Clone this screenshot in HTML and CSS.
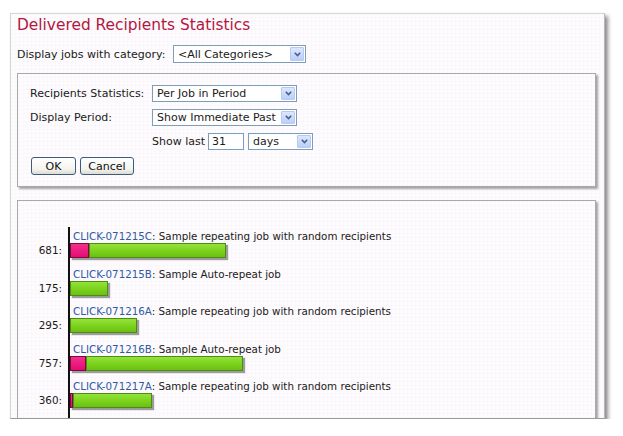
FILE: index.html
```html
<!DOCTYPE html>
<html lang="en">
<head>
    <meta charset="UTF-8">
    <title>Delivered Recipients Statistics</title>
    <link rel="stylesheet" href="styles.css">
</head>
<body>
<div class="page">
    <h1 class="title">Delivered Recipients Statistics</h1>
    <div class="filter">
        <span class="lbl">Display jobs with category:</span>
        <div class="select cat">
            <span class="val">&lt;All Categories&gt;</span>
            <span class="arrow"><svg width="7" height="5" viewBox="0 0 7 5"><path d="M0.8 0.8 L3.5 3.6 L6.2 0.8" fill="none" stroke="#4a5e86" stroke-width="1.6"/></svg></span>
        </div>
    </div>

    <div class="panel opts">
        <div class="field">
            <span class="name">Recipients Statistics:</span>
            <div class="select wide">
                <span class="val">Per Job in Period</span>
                <span class="arrow"><svg width="7" height="5" viewBox="0 0 7 5"><path d="M0.8 0.8 L3.5 3.6 L6.2 0.8" fill="none" stroke="#4a5e86" stroke-width="1.6"/></svg></span>
            </div>
        </div>
        <div class="field">
            <span class="name">Display Period:</span>
            <div class="select wide">
                <span class="val">Show Immediate Past</span>
                <span class="arrow"><svg width="7" height="5" viewBox="0 0 7 5"><path d="M0.8 0.8 L3.5 3.6 L6.2 0.8" fill="none" stroke="#4a5e86" stroke-width="1.6"/></svg></span>
            </div>
        </div>
        <div class="field">
            <span class="name"></span>
            <span class="txt">Show last</span>
            <div class="num">31</div>
            <div class="select days">
                <span class="val">days</span>
                <span class="arrow"><svg width="7" height="5" viewBox="0 0 7 5"><path d="M0.8 0.8 L3.5 3.6 L6.2 0.8" fill="none" stroke="#4a5e86" stroke-width="1.6"/></svg></span>
            </div>
        </div>
        <div class="buttons">
            <button class="btn ok">OK</button>
            <button class="btn cancel">Cancel</button>
        </div>
    </div>

    <div class="panel chart">
        <div class="rows">
            <div class="num-col">681:</div>
            <div class="bar-col">
                <div class="job"><a class="link">CLICK-071215C</a>: Sample repeating job with random recipients</div>
                <div class="bar"><span class="fail" style="width:19px"></span><span class="good" style="width:137px"></span></div>
            </div>

            <div class="num-col">175:</div>
            <div class="bar-col">
                <div class="job"><a class="link">CLICK-071215B</a>: Sample Auto-repeat job</div>
                <div class="bar"><span class="good" style="width:38px"></span></div>
            </div>

            <div class="num-col">295:</div>
            <div class="bar-col">
                <div class="job"><a class="link">CLICK-071216A</a>: Sample repeating job with random recipients</div>
                <div class="bar"><span class="good" style="width:67px"></span></div>
            </div>

            <div class="num-col">757:</div>
            <div class="bar-col">
                <div class="job"><a class="link">CLICK-071216B</a>: Sample Auto-repeat job</div>
                <div class="bar"><span class="fail" style="width:16px"></span><span class="good" style="width:157px"></span></div>
            </div>

            <div class="num-col">360:</div>
            <div class="bar-col">
                <div class="job"><a class="link">CLICK-071217A</a>: Sample repeating job with random recipients</div>
                <div class="bar"><span class="fail" style="width:3px"></span><span class="good" style="width:79px"></span></div>
            </div>

            <div class="num-col"></div>
            <div class="bar-col spacer"></div>
        </div>
    </div>
</div>
</body>
</html>
```

FILE: styles.css
```css
*{
    box-sizing: border-box;
}
html,body{
    margin:0;
    padding:0;
    background:#fff;
}
body{
    font-family: "DejaVu Sans", Verdana, sans-serif;
    font-size: 11px;
    color:#1a1a1a;
}
.page{
    margin:13px 0 0 10px;
    width:595px;
    height:406px;
    overflow: hidden;
    border:1px solid #d6d6d8;
    border-bottom-color:#9a9a9a;
    border-right-color:#b8b8b8;
    box-shadow: 3px 3px 4px #8c8c8c;
    padding:2px 9px 0 6px;
    background-color:#fdfbfd;
    background-image:
        repeating-linear-gradient(0deg, rgba(120,110,140,0.02) 0 1px, transparent 1px 4px),
        repeating-linear-gradient(90deg, rgba(120,110,140,0.02) 0 1px, transparent 1px 4px);
}
.title{
    margin:0;
    font-size:15.4px;
    line-height:18px;
    font-weight: normal;
    color:#b3163f;
}
.filter{
    display:flex;
    align-items: center;
    margin-top:11px;
    height:18px;
}
.filter .lbl{
    width:156px;
}

/* fake select boxes */
.select{
    display:flex;
    align-items: center;
    height:17px;
    background:#fff;
    border:1px solid #7f9db9;
    padding:1px;
}
.select .val{
    flex-grow:1;
    padding-left:3px;
    white-space: nowrap;
    overflow: hidden;
    line-height:13px;
}
.select .arrow{
    width:14px;
    height:100%;
    display:flex;
    align-items: center;
    justify-content: center;
    background: linear-gradient(#dce7fd, #b9cffa);
    border:1px solid #b7c9ef;
    border-radius:1px;
}
.cat{
    width:133px;
    height:18px;
}
.wide{
    width:145px;
}
.days{
    width:65px;
}

.panel{
    border:1px solid #a9a9a9;
    box-shadow: 2px 2px 2px #a3a3a3;
    width:579px;
}
.opts{
    margin-top:10px;
    padding:11px 12px 11px 12px;
}
.field{
    display:flex;
    align-items: center;
    height:17px;
    margin-bottom:7px;
}
.field .name{
    width:122px;
    flex-shrink:0;
}
.field .txt{
    margin-right:3px;
}
.num{
    width:36px;
    height:17px;
    line-height:15px;
    background:#fff;
    border:1px solid #7f9db9;
    padding-left:3px;
    margin-right:4px;
}
.buttons{
    display:flex;
    gap:4px;
    padding-left:1px;
}
.btn{
    font-family: inherit;
    font-size:11px;
    height:18px;
    padding:0;
    color:#111;
    border:1px solid #3d5a80;
    border-radius:3px;
    background: linear-gradient(#ffffff, #f3f3ef 70%, #dedbd0);
}
.btn.ok{
    width:45px;
}
.btn.cancel{
    width:54px;
}

.chart{
    margin-top:13px;
    padding-top:26px;
    height:260px;
}
.rows{
    display:grid;
    grid-template-columns: 50px 1fr;
}
.num-col{
    height:37.5px;
    padding-top:16px;
    padding-right:6px;
    text-align: right;
    font-size:10.4px;
    line-height:15px;
}
.bar-col{
    height:37.5px;
    border-left:2px solid #111;
    padding-top:3px;
}
.bar-col.spacer{
    height:40px;
}
.job{
    font-size:10.3px;
    line-height:13px;
    padding-left:3px;
    white-space: nowrap;
}
.link{
    color:#2f5aa8;
}
.bar{
    display:flex;
    height:15px;
    width:max-content;
    box-shadow: 2px 2px 1px #9c9c9c;
}
.bar span{
    display:block;
    height:15px;
}
.fail{
    background: linear-gradient(#f2308c, #e40c74);
    border:1px solid #7c0a3c;
}
.good{
    background: linear-gradient(#94e23a, #78d01a 60%, #6cbf14);
    border:1px solid #4d8c12;
}
```
